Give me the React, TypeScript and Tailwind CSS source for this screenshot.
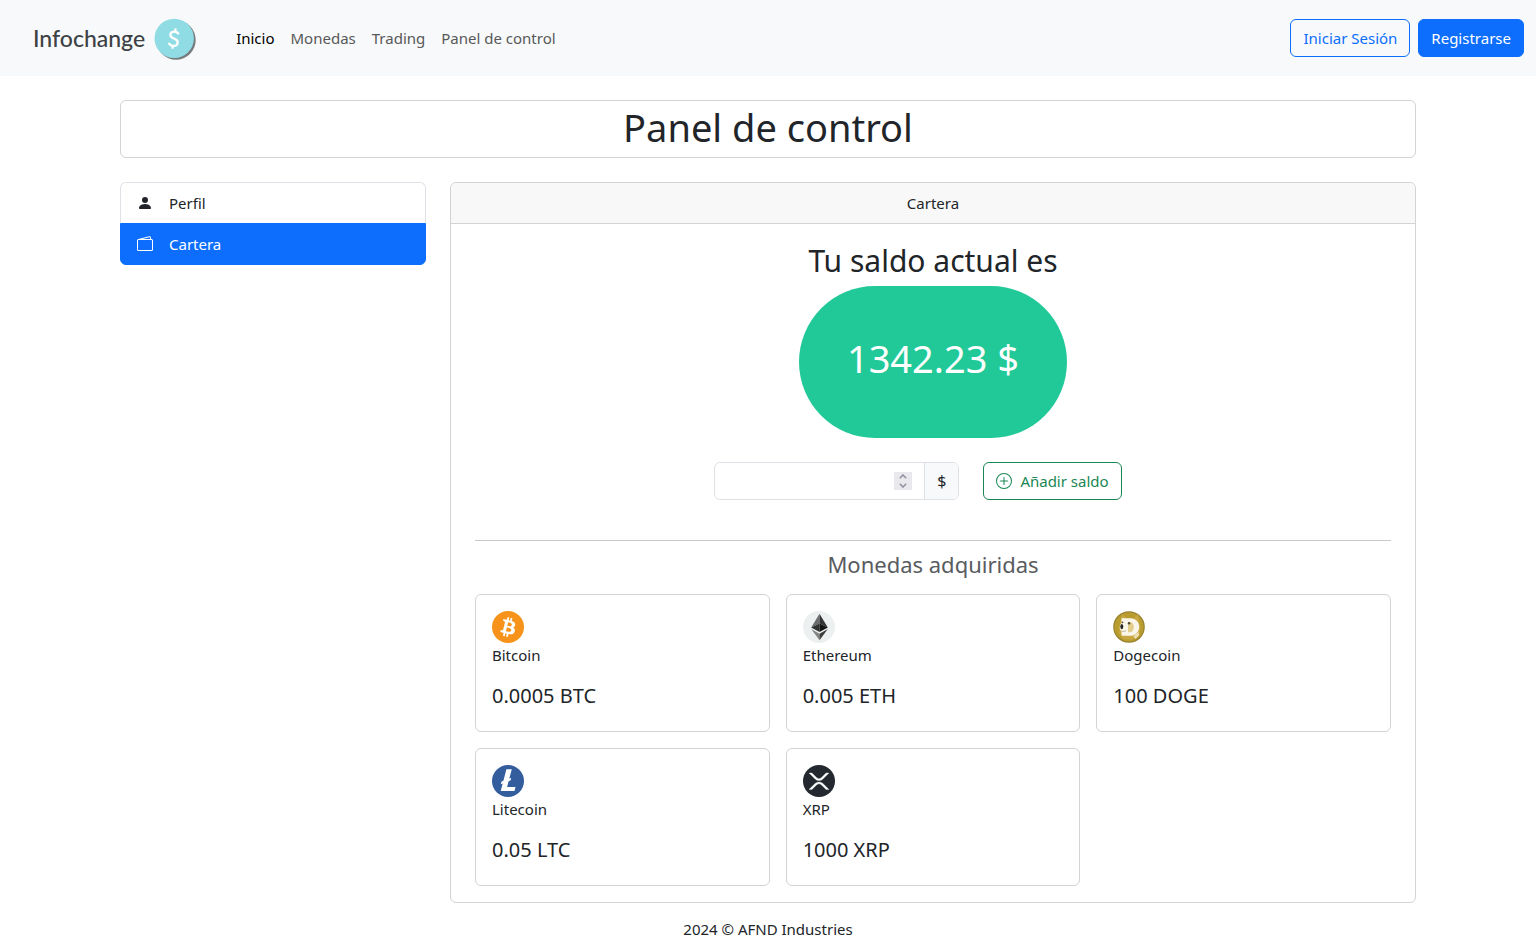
import type { ReactNode } from "react";
import { BsPersonFill, BsPlusCircle, BsWallet2 } from "react-icons/bs";

function Logo() {
  return (
    <a href="#inicio" className="flex items-center gap-[9px] text-[#3d4144]">
      <span className="font-[Lato] text-[23px] font-medium">Infochange</span>
      <svg width="42" height="44" viewBox="0 0 42 44" aria-hidden="true">
        <circle cx="22" cy="24" r="19.700" fill="#777b7e" />
        <circle cx="20.200" cy="22.400" r="19.700" fill="#8fdce4" />
        <path
          d="M24.600 18.200c-.9-1.800-2.400-2.600-4.200-2.600-2.300 0-4 1.400-4 3.500 0 4.500 7.700 2.700 7.300 7.200-.2 2.200-2.100 3.600-4.300 3.600-2.300 0-3.900-1.100-4.500-3.200M21.700 12.400l-.7 3.400M19.100 29.600l-.7 3.200"
          fill="none"
          stroke="#fff"
          strokeWidth="2.300"
        />
      </svg>
    </a>
  );
}

function BitcoinIcon() {
  return (
    <svg width="32" height="32" viewBox="0 0 32 32" aria-hidden="true">
      <circle cx="16" cy="16" r="16" fill="#f7931a" />
      <path
        fill="#fff"
        fillRule="evenodd"
        d="M23.189 14.02c.314-2.096-1.283-3.223-3.465-3.975l.708-2.84-1.728-.43-.69 2.765c-.454-.114-.92-.22-1.385-.326l.695-2.783L15.596 6l-.708 2.839c-.376-.086-.746-.17-1.104-.26l.002-.009-2.384-.595-.46 1.846s1.283.294 1.256.312c.7.175.826.638.805 1.006l-.806 3.235c.048.012.11.03.18.057l-.183-.045-1.13 4.532c-.086.212-.303.531-.793.41.018.025-1.256-.313-1.256-.313l-.858 1.978 2.25.561c.418.105.828.215 1.231.318l-.715 2.872 1.727.43.708-2.84c.472.127.93.245 1.378.357l-.706 2.828 1.728.43.715-2.866c2.948.558 5.164.333 6.097-2.333.752-2.146-.037-3.385-1.588-4.192 1.13-.26 1.98-1.003 2.207-2.538zm-3.95 5.538c-.533 2.147-4.148.986-5.32.695l.95-3.805c1.172.293 4.929.872 4.37 3.11zm.535-5.569c-.487 1.953-3.495.96-4.47.717l.86-3.45c.975.243 4.118.696 3.61 2.733z"
      />
    </svg>
  );
}

function EthereumIcon() {
  return (
    <svg width="32" height="32" viewBox="0 0 32 32" aria-hidden="true">
      <circle cx="16" cy="16" r="16" fill="#ecf0f1" />
      <path d="M16.500 2.700v9.700L8.200 16.400z" fill="#6b6c6d" />
      <path d="M16.500 2.700v9.700l8.300 4z" fill="#343434" />
      <path d="M16.500 12.400v8.700l-8.300-4.700z" fill="#2f3030" />
      <path d="M16.500 12.400v8.700l8.300-4.700z" fill="#131313" />
      <path d="M8.200 18l8.300 4.800V29.300z" fill="#828384" />
      <path d="M24.800 18l-8.300 4.800V29.300z" fill="#3c3c3b" />
    </svg>
  );
}

function DogecoinIcon() {
  return (
    <svg width="32" height="32" viewBox="0 0 32 32" aria-hidden="true">
      <circle cx="16" cy="16" r="15.800" fill="#9a8232" />
      <circle cx="16" cy="16" r="14.600" fill="#b99c2e" />
      <path d="M7.500 9.500l1.800-6 4 3.500h8l3.500-4 1.400 7 1.600 7-2.500 7-6.300 5-9-1-4-6z" fill="#c9a844" />
      <path
        d="M8.500 7.200h8.700c5.200 0 9 3.600 9 8.800s-3.800 8.800-9 8.800H8.800l-.5-4.300-1.600-3 .3-3.500 1.500-2z"
        fill="#faf6ea"
      />
      <path d="M15 11h1.800c2.700 0 4 2 4 5s-1.300 5.200-4 5.200H15z" fill="#e3cd8b" />
      <path d="M20.500 25.500l5-4.500.8 3-3.800 4z" fill="#efe2b8" />
      <ellipse cx="8.800" cy="15.600" rx="1.500" ry="2.600" fill="#252421" />
      <circle cx="9.500" cy="11.300" r=".9" fill="#58513e" />
      <circle cx="16" cy="12.200" r="1.200" fill="#4c4635" />
      <path d="M8.300 20c2 .8 3.800.4 5-.6" fill="none" stroke="#a89a75" strokeWidth=".7" />
    </svg>
  );
}

function LitecoinIcon() {
  return (
    <svg width="32" height="32" viewBox="0 0 32 32" aria-hidden="true">
      <circle cx="16" cy="16" r="16" fill="#345d9d" />
      <path
        fill="#fff"
        d="M10.700 18.500l-1.900.7.700-2.700 1.900-.7L14.400 4.200h5.400l-2.500 9.400 1.900-.7-.7 2.700-1.900.7-1.500 5.600h8.400L22.500 26H8.700z"
      />
    </svg>
  );
}

function XrpIcon() {
  return (
    <svg width="32" height="32" viewBox="0 0 32 32" aria-hidden="true">
      <circle cx="16" cy="16" r="16" fill="#23292f" />
      <path
        fill="#fff"
        stroke="#fff"
        strokeWidth=".3"
        d="M23.070 8h2.890l-6.015 5.957a5.621 5.621 0 01-7.890 0L6.035 8H8.930l4.570 4.523a3.556 3.556 0 004.996 0L23.070 8zM8.895 24.563H6l6.055-5.993a5.621 5.621 0 017.890 0L26 24.563h-2.895L18.500 20a3.556 3.556 0 00-4.996 0l-4.610 4.563z"
      />
    </svg>
  );
}

type Coin = { name: string; amount: string; icon: ReactNode };

const coins: Coin[] = [
  { name: "Bitcoin", amount: "0.0005 BTC", icon: <BitcoinIcon /> },
  { name: "Ethereum", amount: "0.005 ETH", icon: <EthereumIcon /> },
  { name: "Dogecoin", amount: "100 DOGE", icon: <DogecoinIcon /> },
  { name: "Litecoin", amount: "0.05 LTC", icon: <LitecoinIcon /> },
  { name: "XRP", amount: "1000 XRP", icon: <XrpIcon /> },
];

const links = [
  { label: "Inicio", href: "#inicio", active: true },
  { label: "Monedas", href: "#monedas", active: false },
  { label: "Trading", href: "#trading", active: false },
  { label: "Panel de control", href: "#panel", active: false },
];

function Navbar() {
  return (
    <header className="flex min-h-[76px] flex-wrap items-center bg-[#f8f9fa] pr-3 pl-[33px]">
      <Logo />
      <nav className="ml-10 flex flex-1 gap-4">
        {links.map((link) => (
          <a key={link.label} href={link.href} className={link.active ? "text-black" : "text-[#575859]"}>
            {link.label}
          </a>
        ))}
      </nav>
      <div className="flex gap-2">
        <button type="button" className="rounded-md border border-[#0d6efd] px-3 py-1.5 text-[#0d6efd]">
          Iniciar Sesión
        </button>
        <button type="button" className="rounded-md border border-[#0d6efd] bg-[#0d6efd] px-3 py-1.5 text-white">
          Registrarse
        </button>
      </div>
    </header>
  );
}

function Sidebar() {
  return (
    <nav className="self-start">
      <a href="#perfil" className="flex items-center gap-4 rounded-t-md border border-b-0 border-[#dee2e6] px-4 py-2">
        <BsPersonFill size={16} aria-hidden="true" />
        Perfil
      </a>
      <a
        href="#cartera"
        aria-current="page"
        className="flex items-center gap-4 rounded-b-md border border-[#0d6efd] bg-[#0d6efd] px-4 py-2 text-white"
      >
        <BsWallet2 size={16} aria-hidden="true" />
        Cartera
      </a>
    </nav>
  );
}

function BalanceForm() {
  return (
    <form className="mt-6 flex justify-center gap-6 pr-[30px]">
      <div className="flex h-[38px] w-[245px] overflow-hidden rounded-md border border-[#dee2e6]">
        <input
          id="saldo"
          type="number"
          aria-label="Saldo en dólares"
          className="min-w-0 flex-1 [appearance:textfield] pl-3 outline-none"
        />
        <span className="mr-3 flex flex-col self-center bg-[#e9e9ed] text-[#8f8f9d]">
          <button type="button" aria-label="Aumentar" className="flex h-[9px] w-[18px] items-center justify-center">
            <svg width="8" height="5" viewBox="0 0 8 5" fill="none" stroke="currentColor" strokeWidth="1.500" aria-hidden="true">
              <path d="M.8 4.200 4 1l3.200 3.200" />
            </svg>
          </button>
          <button type="button" aria-label="Disminuir" className="flex h-[9px] w-[18px] items-center justify-center">
            <svg width="8" height="5" viewBox="0 0 8 5" fill="none" stroke="currentColor" strokeWidth="1.500" aria-hidden="true">
              <path d="M.8.8 4 4 7.200.8" />
            </svg>
          </button>
        </span>
        <label htmlFor="saldo" className="flex items-center border-l border-[#dee2e6] bg-[#f8f9fa] px-3 text-base">
          $
        </label>
      </div>
      <button
        type="button"
        className="flex items-center gap-2 rounded-md border border-[#198754] px-3 py-1.5 text-[#198754]"
      >
        <BsPlusCircle size={16} aria-hidden="true" />
        Añadir saldo
      </button>
    </form>
  );
}

function CoinCard({ coin }: { coin: Coin }) {
  return (
    <article className="rounded-md border border-[#d2d3d4] p-4">
      {coin.icon}
      <p>{coin.name}</p>
      <p className="mt-[17px] mb-[7px] text-xl leading-6">{coin.amount}</p>
    </article>
  );
}

export default function App() {
  return (
    <div className="min-h-screen bg-white font-['Noto_Sans',sans-serif] text-[15px] leading-6 text-[#212529]">
      <Navbar />
      <main className="mx-auto max-w-[1320px] px-3 pt-6">
        <h1 className="rounded-md border border-[#d2d3d4] px-1 pt-0.5 pb-1.5 text-center text-[38px] leading-[48px]">
          Panel de control
        </h1>
        <div className="mt-6 grid gap-6 md:grid-cols-[306px_1fr]">
          <Sidebar />
          <section className="rounded-md border border-[#d2d3d4] text-center">
            <div className="rounded-t-md border-b border-[#d2d3d4] bg-[#f8f8f8] py-2">Cartera</div>
            <div className="px-6 pt-[18px] pb-4">
              <h2 className="text-[30px] leading-[38px]">Tu saldo actual es</h2>
              <p className="mx-auto mt-1.5 w-fit rounded-full bg-[#21c998] px-12 pt-12 pb-14 text-[38px] leading-[48px] text-white">
                1342.23 $
              </p>
              <BalanceForm />
              <hr className="mt-10 border-[#c8c9ca]" />
              <h3 className="mt-[7px] text-[22px] leading-8 text-[#595c5f]">Monedas adquiridas</h3>
              <div className="mt-3.5 grid gap-4 text-left sm:grid-cols-3">
                {coins.map((coin) => (
                  <CoinCard key={coin.name} coin={coin} />
                ))}
              </div>
            </div>
          </section>
        </div>
      </main>
      <footer className="pt-3.5 pb-1 text-center">2024 © AFND Industries</footer>
    </div>
  );
}
